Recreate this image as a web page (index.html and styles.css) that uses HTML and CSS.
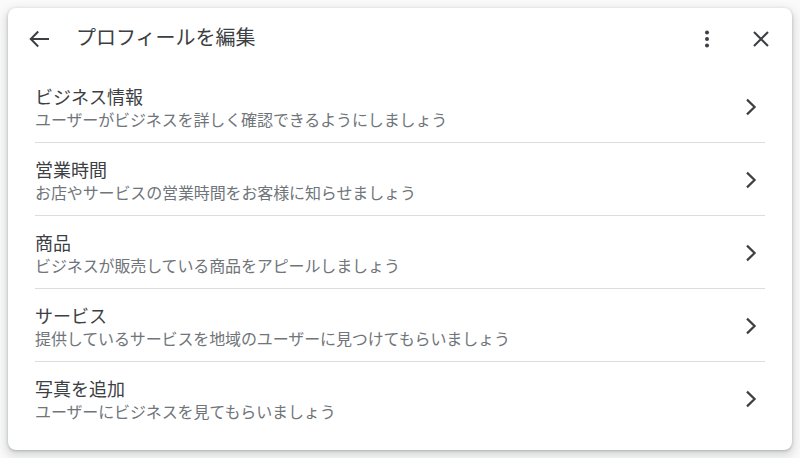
FILE: index.html
```html
<!DOCTYPE html>
<html lang="ja">
<head>
<meta charset="utf-8">
<title>プロフィールを編集</title>
<link rel="stylesheet" href="styles.css">
</head>
<body>
<div class="card">
  <header class="header">
    <button class="icon-btn back" aria-label="戻る">
      <svg viewBox="0 0 24 24" width="24" height="24"><path d="M4 12H21M10.5 5.2L3.8 12l6.7 6.8" fill="none" stroke="#3c4043" stroke-width="2" stroke-linecap="square" stroke-linejoin="miter"/></svg>
    </button>
    <h1 class="title">プロフィールを編集</h1>
    <button class="icon-btn more" aria-label="その他">
      <svg viewBox="0 0 24 24" width="24" height="24"><circle cx="12" cy="5.5" r="2" fill="#3c4043"/><circle cx="12" cy="12" r="2" fill="#3c4043"/><circle cx="12" cy="18.5" r="2" fill="#3c4043"/></svg>
    </button>
    <button class="icon-btn close" aria-label="閉じる">
      <svg viewBox="0 0 24 24" width="24" height="24"><path d="M5 5L19 19M19 5L5 19" fill="none" stroke="#3c4043" stroke-width="2.1"/></svg>
    </button>
  </header>
  <ul class="list">
    <li class="row">
      <div class="text">
        <div class="row-title">ビジネス情報</div>
        <div class="row-sub">ユーザーがビジネスを詳しく確認できるようにしましょう</div>
      </div>
      <svg class="chev" viewBox="0 0 24 24" width="24" height="24"><path d="M9 4.6L16.6 12 9 19.4" fill="none" stroke="#3c4043" stroke-width="2.2"/></svg>
    </li>
    <li class="row">
      <div class="text">
        <div class="row-title">営業時間</div>
        <div class="row-sub">お店やサービスの営業時間をお客様に知らせましょう</div>
      </div>
      <svg class="chev" viewBox="0 0 24 24" width="24" height="24"><path d="M9 4.6L16.6 12 9 19.4" fill="none" stroke="#3c4043" stroke-width="2.2"/></svg>
    </li>
    <li class="row">
      <div class="text">
        <div class="row-title">商品</div>
        <div class="row-sub">ビジネスが販売している商品をアピールしましょう</div>
      </div>
      <svg class="chev" viewBox="0 0 24 24" width="24" height="24"><path d="M9 4.6L16.6 12 9 19.4" fill="none" stroke="#3c4043" stroke-width="2.2"/></svg>
    </li>
    <li class="row">
      <div class="text">
        <div class="row-title">サービス</div>
        <div class="row-sub">提供しているサービスを地域のユーザーに見つけてもらいましょう</div>
      </div>
      <svg class="chev" viewBox="0 0 24 24" width="24" height="24"><path d="M9 4.6L16.6 12 9 19.4" fill="none" stroke="#3c4043" stroke-width="2.2"/></svg>
    </li>
    <li class="row">
      <div class="text">
        <div class="row-title">写真を追加</div>
        <div class="row-sub">ユーザーにビジネスを見てもらいましょう</div>
      </div>
      <svg class="chev" viewBox="0 0 24 24" width="24" height="24"><path d="M9 4.6L16.6 12 9 19.4" fill="none" stroke="#3c4043" stroke-width="2.2"/></svg>
    </li>
  </ul>
</div>
</body>
</html>
```
FILE: styles.css
```css
html, body {
  margin: 0;
  padding: 0;
}
body {
  background: #fafafa;
  padding: 8px;
  font-family: "Noto Sans CJK JP", "Noto Sans", Roboto, sans-serif;
  color: #3c4043;
}
.card {
  background: #fff;
  border-radius: 8px;
  box-shadow: 0 1px 3px rgba(60, 64, 67, 0.3), 0 4px 8px 3px rgba(60, 64, 67, 0.15);
  height: 442px;
  box-sizing: border-box;
  overflow: hidden;
}
.header {
  height: 62px;
  display: flex;
  align-items: center;
  padding: 0 19.5px 0 19px;
}
.icon-btn {
  width: 24px;
  height: 24px;
  padding: 0;
  margin: 0;
  border: 0;
  background: none;
  display: flex;
  align-items: center;
  justify-content: center;
  flex: none;
}
.icon-btn svg {
  display: block;
}
.title {
  flex: 1;
  margin: 0 0 0 25px;
  font-size: 20px;
  font-weight: 400;
  line-height: 28px;
  color: #3c4043;
  padding-bottom: 5px;
}
.more {
  margin-right: 29.5px;
}
.list {
  list-style: none;
  margin: 0;
  padding: 0 27px;
}
.row {
  display: flex;
  align-items: center;
  padding: 14px 0 12px;
  border-top: 1px solid #dadce0;
}
.row:first-child {
  border-top: 0;
}
.text {
  flex: 1;
  min-width: 0;
}
.row-title {
  font-size: 18px;
  line-height: 24px;
  color: #3c4043;
}
.row-sub {
  font-size: 16px;
  line-height: 22px;
  letter-spacing: -0.12px;
  color: #70757a;
}
.chev {
  display: block;
  flex: none;
  margin-right: 3px;
}
```
